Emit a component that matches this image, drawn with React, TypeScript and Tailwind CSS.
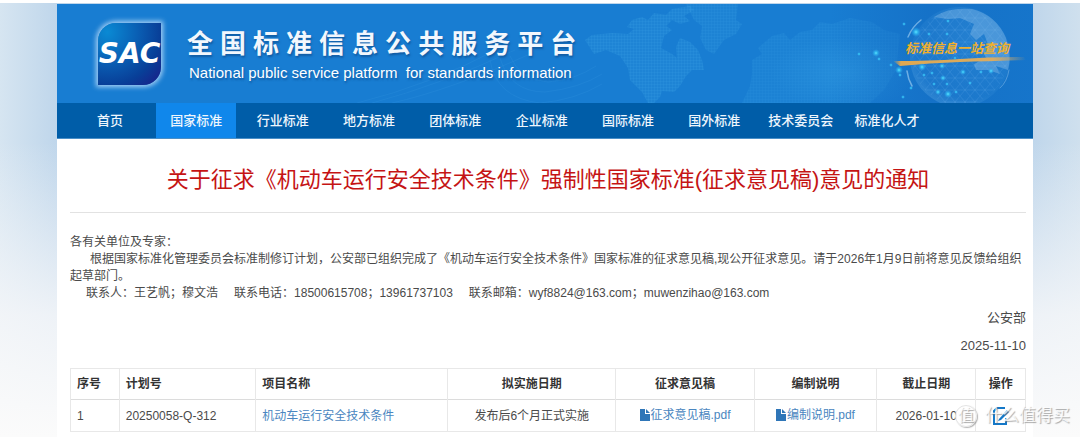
import React from "react";

const navItems = [
  "首页",
  "国家标准",
  "行业标准",
  "地方标准",
  "团体标准",
  "企业标准",
  "国际标准",
  "国外标准",
  "技术委员会",
  "标准化人才",
];

const sparks: [number, number, number][] = [
  [876, 53, 3], [859, 54, 1], [879, 59, 1], [899, 70, 3], [891, 65, 1], [900, 75, 1],
  [916, 32, 4], [904, 24, 1], [948, 21, 1], [929, 34, 1], [947, 34, 1], [922, 67, 3],
  [942, 66, 2], [924, 75, 1], [932, 73, 1], [943, 78, 2], [934, 84, 1], [947, 84, 1],
  [938, 92, 2], [948, 94, 3], [956, 92, 1], [963, 72, 2], [970, 83, 1], [991, 71, 2],
  [911, 88, 1], [903, 97, 1], [955, 58, 1], [981, 72, 1],
];

function BannerArt() {
  return (
    <svg
      className="pointer-events-none absolute inset-y-0 right-0 h-full w-[676px]"
      viewBox="357 4 676 99"
      preserveAspectRatio="xMaxYMid slice"
      aria-hidden="true"
    >
      <defs>
        <pattern id="mapDots" width="3" height="3" patternUnits="userSpaceOnUse">
          <rect width="3" height="3" fill="#2b93dc" fillOpacity="0.5" />
          <path d="M0 0H3M0 0V3" stroke="#46aceb" strokeOpacity="0.5" strokeWidth="0.8" />
        </pattern>
        <pattern id="mesh" width="10" height="12" patternUnits="userSpaceOnUse">
          <path d="M0 0L10 12M10 0L0 12M0 6H10" stroke="#8ecbf5" strokeOpacity="0.25" strokeWidth="0.5" />
        </pattern>
        <radialGradient id="spark">
          <stop offset="0" stopColor="#5fe6ff" />
          <stop offset="0.4" stopColor="#35c4f7" stopOpacity="0.7" />
          <stop offset="1" stopColor="#2aa8f0" stopOpacity="0" />
        </radialGradient>
        <radialGradient id="globe" cx="0.6" cy="0.35" r="0.7">
          <stop offset="0" stopColor="#3b94dc" stopOpacity="0.4" />
          <stop offset="0.8" stopColor="#2b86d4" stopOpacity="0.3" />
          <stop offset="1" stopColor="#66aee6" stopOpacity="0.35" />
        </radialGradient>
        <radialGradient id="glow">
          <stop offset="0" stopColor="#38a3e6" stopOpacity="0.35" />
          <stop offset="1" stopColor="#38a3e6" stopOpacity="0" />
        </radialGradient>
        <linearGradient id="shade">
          <stop offset="0" stopColor="#1266bd" stopOpacity="0" />
          <stop offset="0.5" stopColor="#1266bd" stopOpacity="0.5" />
          <stop offset="1" stopColor="#1266bd" stopOpacity="0.35" />
        </linearGradient>
        <linearGradient id="brush">
          <stop offset="0" stopColor="#e0a850" stopOpacity="0" />
          <stop offset="0.06" stopColor="#e0a850" />
          <stop offset="0.75" stopColor="#d9ab62" />
          <stop offset="1" stopColor="#d9ab62" stopOpacity="0" />
        </linearGradient>
      </defs>
      <g fill="none" stroke="#3c9ae2" strokeOpacity="0.3" strokeWidth="0.7">
        <path d="M357 103Q430 85 500 48M372 103Q440 85 515 50M392 103Q450 90 530 54" />
        <path d="M490 60Q496 98 540 103Q575 100 602 84M500 58Q510 92 545 92Q580 88 602 74M510 56Q520 80 548 82Q575 80 596 66" />
      </g>
      <path
        d="M585 40L592 35L612 33L628 34L634 29L627 27L632 20L642 17L648 20L654 13L666 15L672 9L690 6L694 10L684 16L690 21L680 24L672 20L666 26L672 30L664 36L661 48L672 54L677 58L676 47L680 38L690 42L698 50L702 60L704 70L692 70L686 76L680 86L674 92L662 91L660 97L654 103H648L642 92L630 80L628 68L620 56L606 50L594 54Z"
        fill="url(#mapDots)"
        fillOpacity="0.65"
      />
      <path
        d="M686 4H738L736 20L742 24L736 34L724 40L714 54L706 50L700 38L702 26L694 20Z"
        fill="url(#mapDots)"
        fillOpacity="0.5"
      />
      <path
        d="M752 60L762 54L758 48L772 36L784 33L790 40L800 32L812 30L820 22L832 24L850 18L872 22L884 30L900 34L896 70L884 90L870 103H742L750 86L752 74Z"
        fill="url(#mapDots)"
        fillOpacity="0.4"
      />
      <ellipse cx="845" cy="73" rx="75" ry="36" fill="url(#glow)" />
      <rect x="830" y="4" width="203" height="99" fill="url(#shade)" />
      <circle cx="960" cy="57" r="50" fill="url(#globe)" />
      <circle cx="960" cy="57" r="48" fill="url(#mesh)" />
      <path
        d="M934 17Q948 7 972 9Q996 15 1006 38Q1012 56 1008 70L996 66L1000 74L988 70L976 70L974 64L986 58L982 50L988 44L984 34L976 40L970 34L974 24L960 18L948 19Z"
        fill="#9bc8ee"
        fillOpacity="0.35"
      />
      <g fill="none" stroke="#a9d4f5" strokeLinecap="round">
        <path d="M908 37Q912 27 921 20" strokeOpacity="0.6" strokeWidth="1.5" />
        <path d="M907 71Q908 79 912 86" strokeOpacity="0.6" strokeWidth="1.6" />
        <path d="M1009 70Q1007 82 1000 88" strokeOpacity="0.4" />
      </g>
      <path d="M893 61Q930 61 960 59T1024 57L1026 60Q990 61 960 62T900 66Z" fill="url(#brush)" />
      {sparks.map(([x, y, r]) => (
        <circle key={`${x}-${y}`} cx={x} cy={y} r={r + 1} fill="url(#spark)" />
      ))}
    </svg>
  );
}

function Logo() {
  return (
    <div className="flex h-[62px] w-[63px] shrink-0 items-center justify-center rounded-tl-[18px] rounded-br-[18px] bg-[radial-gradient(circle_at_15%_15%,#0a8ad4_0%,#0a5fb4_40%,#083f98_70%,#1c1a86_100%)] shadow-[0_0_5px_2px_rgba(190,222,250,0.85)]">
      <span className="font-['DejaVu_Sans',sans-serif] text-[28px] leading-none font-bold text-white italic">
        SAC
      </span>
    </div>
  );
}

function FileIcon() {
  return (
    <svg className="h-3 w-[10px] shrink-0" viewBox="0 0 10 12" fill="#2f76b8" aria-hidden="true">
      <path d="M0 0H5V5H10V12H0ZM6 0L10 4H6Z" />
    </svg>
  );
}

function EditIcon() {
  return (
    <svg className="h-[18px] w-4" viewBox="0 0 16 18" fill="none" aria-hidden="true">
      <path d="M12 1H4L1 4V17H13V11" stroke="#1478c8" strokeWidth="2" />
      <path d="M14 3L6 12L5 14L8 13L16 5Z" fill="#1478c8" />
    </svg>
  );
}

function PdfLink({ name }: { name: string }) {
  return (
    <a href="#" className="inline-flex items-center gap-px text-[#4a86c0]">
      <FileIcon />
      {name}
    </a>
  );
}

const columns = [
  { label: "序号", style: "w-[5.1%] text-left" },
  { label: "计划号", style: "w-[14.3%] text-left" },
  { label: "项目名称", style: "w-[20.1%] text-left" },
  { label: "拟实施日期", style: "w-[17.6%] text-center" },
  { label: "征求意见稿", style: "w-[14.5%] text-center" },
  { label: "编制说明", style: "w-[12.8%] text-center" },
  { label: "截止日期", style: "w-[10.4%] text-center" },
  { label: "操作", style: "w-[5.2%] text-center" },
];

export default function App() {
  return (
    <div className="relative overflow-hidden bg-white pt-[3px] font-['Liberation_Sans','Noto_Sans_CJK_SC',sans-serif] text-xs text-[#4a4a4a]">
      <div className="bg-[linear-gradient(180deg,rgba(255,255,255,0)_0%,rgba(255,255,255,0)_32%,rgba(246,247,249,0.85)_72%,#fbfbfb_100%),linear-gradient(90deg,#d6e5f1_0%,#bfd6eb_5.3%,#bfd6eb_95.6%,#cfe0ee_100%)] px-[4.35%] pt-px pl-[5.28%]">
        <div className="bg-white pb-[5px]">
          <header>
            <div className="relative flex h-[99px] items-center gap-[26px] bg-[#187dd2] pl-[41px]">
              <BannerArt />
              <Logo />
              <div className="relative flex flex-col text-white [text-shadow:1px_2px_2px_rgba(10,60,120,0.5)]">
                <h1 className="flex gap-[7px] text-[26px] leading-[34px] font-bold text-[#f2f7fd]">
                  {Array.from("全国标准信息公共服务平台").map((char) => (
                    <span key={char}>{char}</span>
                  ))}
                </h1>
                <p className="pt-1 pl-[2px] text-[15px] leading-4 whitespace-pre">
                  National public service platform  for standards information
                </p>
              </div>
              <p className="absolute top-[37px] right-[24px] font-['Liberation_Serif','Noto_Sans_CJK_SC',serif] text-[13px] leading-4 font-bold text-[#efb02e] italic">
                标准信息一站查询
              </p>
            </div>
            <nav className="border-b border-[#4a8fc8] bg-[#005da8]">
              <ul className="flex justify-between pr-[106px] pl-[13px]">
                {navItems.map((item) => (
                  <li key={item} className="w-20">
                    <a
                      href="#"
                      aria-current={item === "国家标准" ? "page" : undefined}
                      className="block text-center text-[13px] leading-[35px] font-medium text-[#eef6fd] aria-[current=page]:bg-[#1087eb]"
                    >
                      {item}
                    </a>
                  </li>
                ))}
              </ul>
            </nav>
          </header>

          <main className="pr-[7px] pl-[13px]">
            <h2 className="border-b border-[#e2e2e2] pt-[25px] pb-4 text-center text-[22px] leading-8 text-[#c51414]">
              关于征求《机动车运行安全技术条件》强制性国家标准(征求意见稿)意见的通知
            </h2>
            <div className="pt-[21px] leading-[17px]">
              <p>各有关单位及专家：</p>
              <p className="indent-5">
                根据国家标准化管理委员会标准制修订计划，公安部已组织完成了《机动车运行安全技术条件》国家标准的征求意见稿,现公开征求意见。请于2026年1月9日前将意见反馈给组织起草部门。
              </p>
              <p className="flex gap-4 pl-4">
                <span>联系人：王艺帆；穆文浩</span>
                <span>联系电话：18500615708；13961737103</span>
                <span>联系邮箱：wyf8824@163.com；muwenzihao@163.com</span>
              </p>
            </div>
            <div className="pt-[2px] pb-2 text-right text-[13px] leading-7">
              <p>公安部</p>
              <p>2025-11-10</p>
            </div>
            <table className="w-full table-fixed border-collapse border border-[#e8e8e8]">
              <thead>
                <tr className="h-[31px] border-b border-[#dcdcdc] text-[#333333]">
                  {columns.map((column) => (
                    <th key={column.label} className={`border-x border-[#e8e8e8] px-[6px] font-bold ${column.style}`}>
                      {column.label}
                    </th>
                  ))}
                </tr>
              </thead>
              <tbody>
                <tr className="h-8 text-center [&>td]:border-x [&>td]:border-[#e8e8e8] [&>td]:px-[6px]">
                  <td className="text-left">1</td>
                  <td className="text-left">20250058-Q-312</td>
                  <td className="text-left">
                    <a href="#" className="text-[#4a86c0]">机动车运行安全技术条件</a>
                  </td>
                  <td>发布后6个月正式实施</td>
                  <td><PdfLink name="征求意见稿.pdf" /></td>
                  <td><PdfLink name="编制说明.pdf" /></td>
                  <td>2026-01-10</td>
                  <td>
                    <button type="button" aria-label="操作" className="mx-auto block">
                      <EditIcon />
                    </button>
                  </td>
                </tr>
              </tbody>
            </table>
          </main>
        </div>
      </div>
      <div className="pointer-events-none absolute right-[10px] bottom-[9px] flex items-center gap-2 text-[17px] leading-6 text-white/80 [text-shadow:1px_1px_1px_rgba(110,110,110,0.6)]">
        <span className="flex size-[22px] items-center justify-center rounded-full border border-[#e4e4e4] bg-white/85 text-base shadow-[1px_1px_1px_rgba(110,110,110,0.5)]">
          值
        </span>
        <span>什么值得买</span>
      </div>
    </div>
  );
}
